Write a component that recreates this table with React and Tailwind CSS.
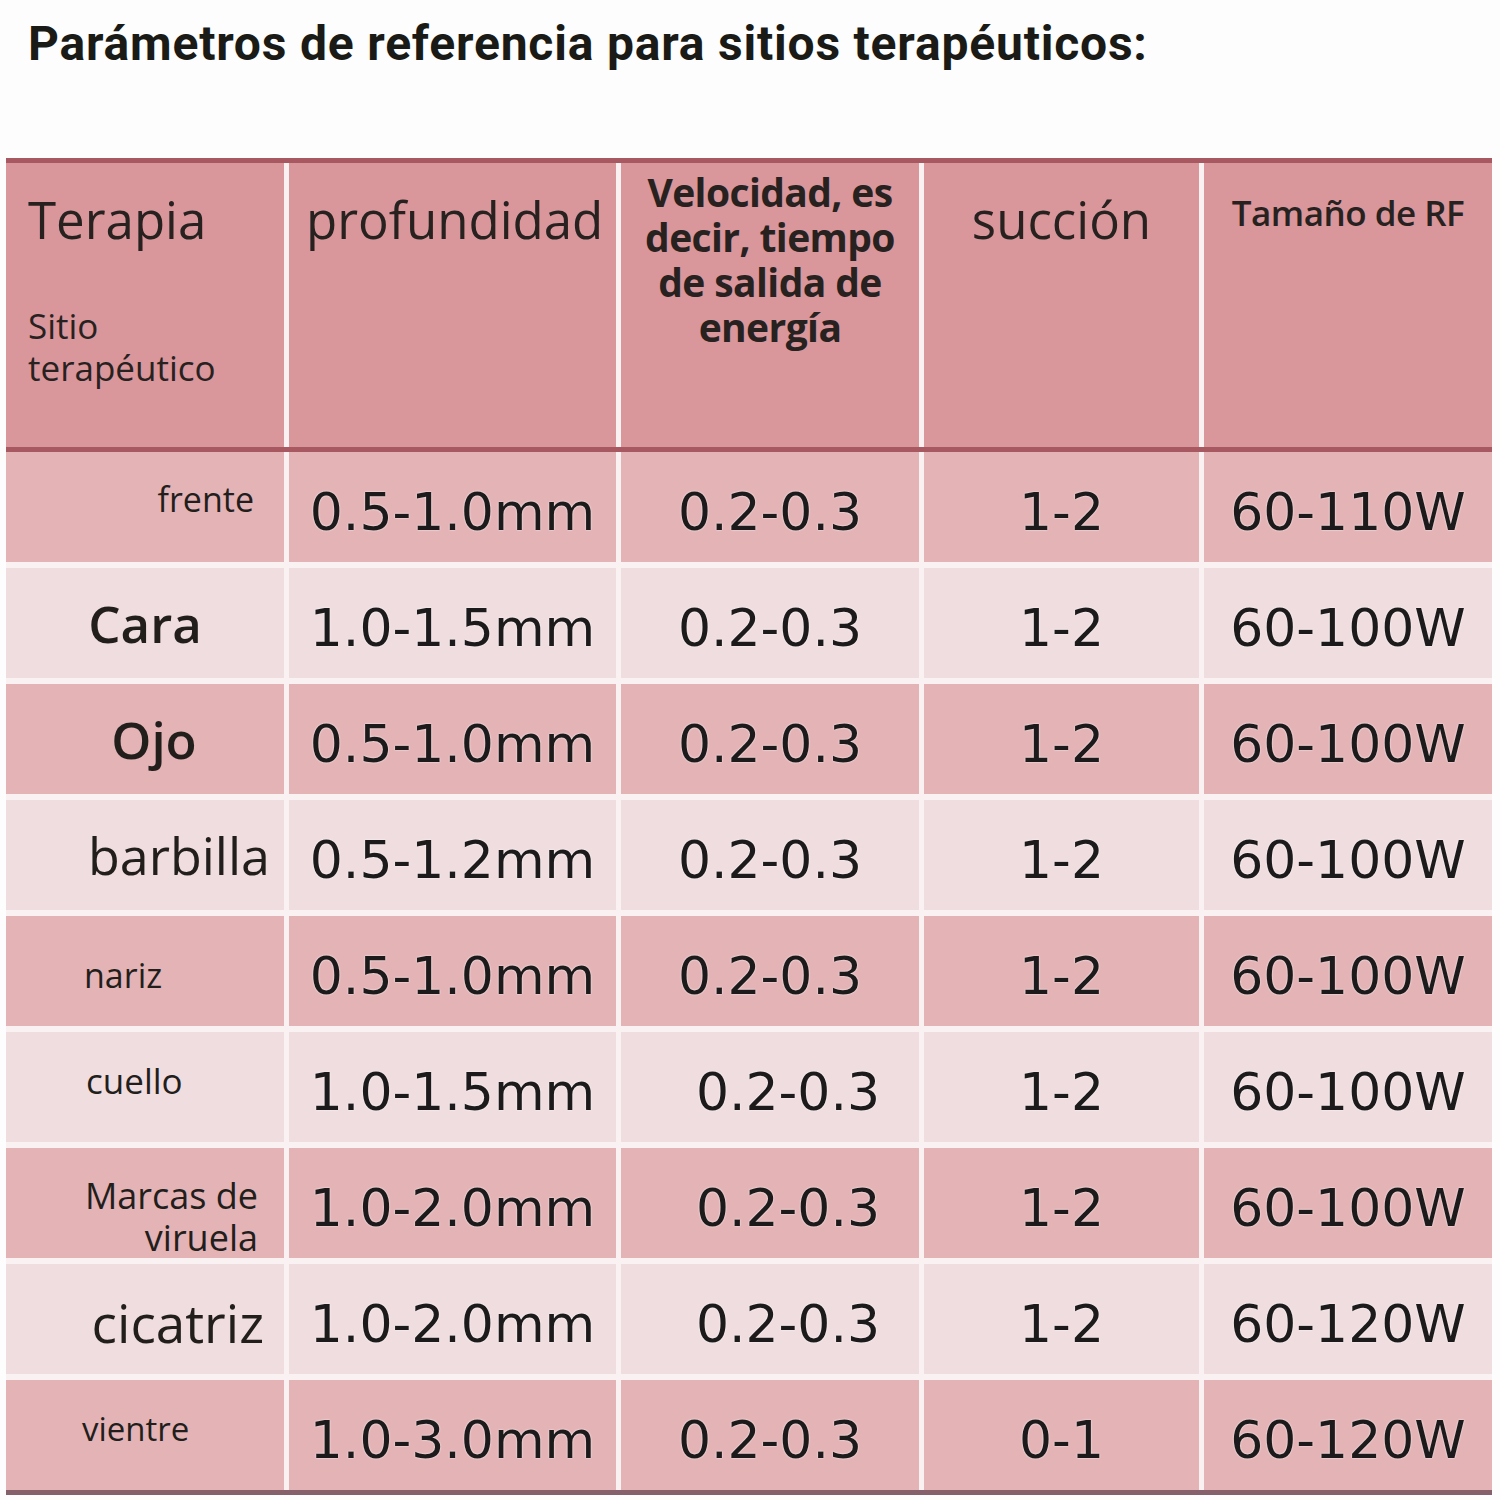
import React from 'react';

const rows = [
  { site: 'frente', cls: 'text-[34px] justify-end items-start pt-[22px] pr-[30px]', depth: '0.5-1.0mm', speed: '0.2-0.3', suck: '1-2', rf: '60-110W', dark: true },
  { site: 'Cara', cls: 'text-[51px] font-semibold justify-center', depth: '1.0-1.5mm', speed: '0.2-0.3', suck: '1-2', rf: '60-100W' },
  { site: 'Ojo', cls: 'text-[51px] font-semibold justify-center pl-[18px]', depth: '0.5-1.0mm', speed: '0.2-0.3', suck: '1-2', rf: '60-100W', dark: true },
  { site: 'barbilla', cls: 'text-[52px] justify-end pr-[14px]', depth: '0.5-1.2mm', speed: '0.2-0.3', suck: '1-2', rf: '60-100W' },
  { site: 'nariz', cls: 'text-[34px] justify-start pl-[78px] pt-[8px]', depth: '0.5-1.0mm', speed: '0.2-0.3', suck: '1-2', rf: '60-100W', dark: true },
  { site: 'cuello', cls: 'text-[35px] justify-start pl-[80px] pb-[12px]', depth: '1.0-1.5mm', speed: '0.2-0.3', suck: '1-2', rf: '60-100W', shift: true },
  { site: 'Marcas de\nviruela', cls: 'text-[36px] justify-end text-right pr-[26px] pt-[28px] leading-[42px]', depth: '1.0-2.0mm', speed: '0.2-0.3', suck: '1-2', rf: '60-100W', dark: true, shift: true },
  { site: 'cicatriz', cls: 'text-[53px] justify-end pr-[20px] pt-[8px]', depth: '1.0-2.0mm', speed: '0.2-0.3', suck: '1-2', rf: '60-120W', shift: true },
  { site: 'vientre', cls: 'text-[33px] justify-start pl-[76px] pb-[12px]', depth: '1.0-3.0mm', speed: '0.2-0.3', suck: '0-1', rf: '60-120W', dark: true },
];

const val = "flex items-center justify-center pt-[10px] text-[52px] text-[#1c1a1a] [font-family:'DejaVu_Sans',sans-serif] [text-shadow:0_0_2px_#ffffff]";

export default function App() {
  return (
    <div className="w-[1500px] h-[1500px] bg-[#fdfdfd] [font-family:'Open_Sans',sans-serif]">
      {/* Title */}
      <h1 className="pl-[28px] pt-[16px] h-[158px] text-[48px] font-bold tracking-[0.8px] text-[#1a1a17] [font-family:Roboto,sans-serif] leading-[56px]">
        Parámetros de referencia para sitios terapéuticos:
      </h1>

      {/* Table */}
      <div className="ml-[6px] w-[1486px] border-t-[5px] border-[#a85860] border-b-[5px] border-b-[#86606a] bg-[#faf2f2]">
        {/* Header */}
        <div className="grid grid-cols-[278px_327px_298px_275px_288px] gap-x-[5px] h-[284px] text-[#27221f]">
          <div className="bg-[#d9969b] flex flex-col pl-[22px] pt-[26px]">
            <span className="text-[51px] leading-[60px]">Terapia</span>
            <span className="text-[35px] leading-[42px] mt-[56px]">Sitio<br />terapéutico</span>
          </div>
          <div className="bg-[#d9969b] pl-[17px] pt-[26px]">
            <span className="text-[51px] leading-[60px]">profundidad</span>
          </div>
          <div className="bg-[#d9969b] pt-[6px] text-center text-[39px] font-bold leading-[45px] tracking-[-0.6px]">
            Velocidad, es<br />decir, tiempo<br />de salida de<br />energía
          </div>
          <div className="bg-[#d9969b] pt-[26px] text-center">
            <span className="text-[51px] leading-[60px]">succión</span>
          </div>
          <div className="bg-[#d9969b] pt-[30px] text-center text-[35px] font-semibold leading-[40px] tracking-[-0.5px]">
            Tamaño de RF
          </div>
        </div>
        <div className="h-[5px] bg-[#a85860]" />

        {/* Body */}
        <div className="grid grid-cols-[278px_327px_298px_275px_288px] gap-x-[5px] gap-y-[6px] auto-rows-[110px]">
          {rows.map((r) => {
            const bg = r.dark ? 'bg-[#e4b3b6]' : 'bg-[#f0dde0]';
            return (
              <React.Fragment key={r.site}>
                <div className={`${bg} flex items-center text-[#221e1c] ${r.cls}`}>
                  <span className="whitespace-pre-line">{r.site}</span>
                </div>
                <div className={`${bg} ${val}`}>{r.depth}</div>
                <div className={`${bg} ${val} ${r.shift ? 'pl-[36px]' : ''}`}>{r.speed}</div>
                <div className={`${bg} ${val}`}>{r.suck}</div>
                <div className={`${bg} ${val}`}>{r.rf}</div>
              </React.Fragment>
            );
          })}
        </div>
      </div>
    </div>
  );
}
